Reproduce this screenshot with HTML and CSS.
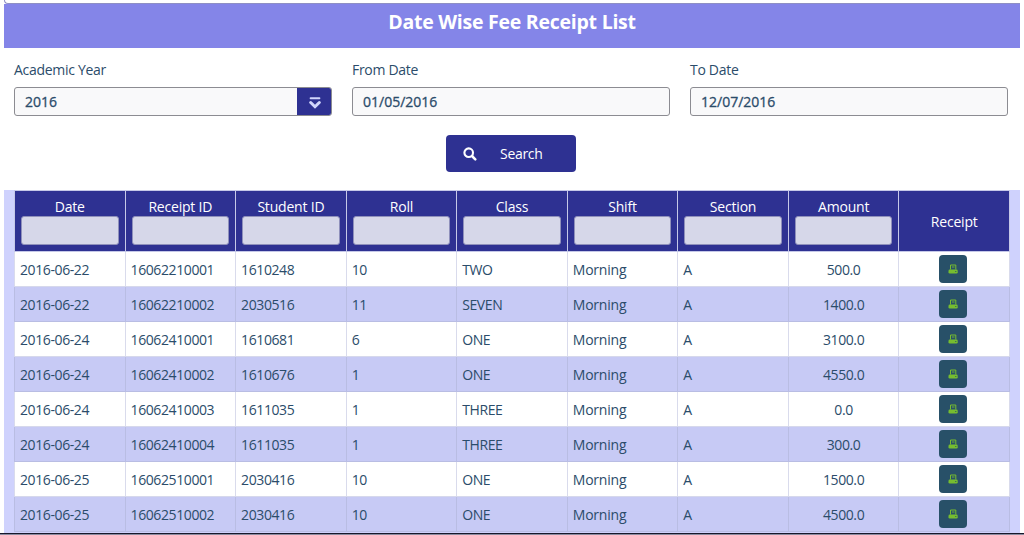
FILE: index.html
```html
<!DOCTYPE html>
<html lang="en">
<head>
<meta charset="utf-8">
<title>Date Wise Fee Receipt List</title>
<link rel="stylesheet" href="styles.css">
</head>
<body>
<svg class="defs" width="0" height="0">
  <symbol id="printer" viewBox="0 0 10 10">
    <path d="M2.5 5.5V1h5.3v4.5" fill="none" stroke="#76bd2f"/>
    <path d="M4 3h2.5" fill="none" stroke="#76bd2f" stroke-width=".9"/>
    <path d="M1.8 5.6h6.6q1.3 0 1.3 1.3v1.3q0 1.3-1.3 1.3H1.8Q.5 9.500.5 8.200V6.900Q.5 5.600 1.800 5.600Z" fill="#76bd2f"/>
    <path d="M7.300 7.500h1" stroke="#285068" fill="none"/>
  </symbol>
</svg>
<div class="page">
  <div class="strip"></div>
  <h1 class="title">Date Wise Fee Receipt List</h1>
  <form class="filters">
    <div class="field"><label>Academic Year</label>
      <div class="control">2016<span class="toggle"><svg width="12" height="12" viewBox="0 0 12 12"><path d="M1.600 1.300h8.800" stroke="#d0d4fb" stroke-width="2" stroke-linecap="round"/><path d="M1.700 5.500L6 9.700l4.300-4.200" fill="none" stroke="#d0d4fb" stroke-width="3" stroke-linecap="round"/></svg></span></div></div>
    <div class="field"><label>From Date</label><div class="control">01/05/2016</div></div>
    <div class="field"><label>To Date</label><div class="control">12/07/2016</div></div>
  </form>
  <div class="actions"><button class="search" type="button"><svg width="14" height="14" viewBox="0 0 14 14"><circle cx="5.7" cy="5.7" r="4.3" fill="none" stroke="#fff" stroke-width="2.1"/><path d="M9 9l3.3 3.3" stroke="#fff" stroke-width="2.5" stroke-linecap="round"/></svg><span>Search</span></button></div>
  <div class="panel">
    <table class="grid">
      <thead><tr>
        <th><span>Date</span><i class="filter"></i></th><th><span>Receipt ID</span><i class="filter"></i></th><th><span>Student ID</span><i class="filter"></i></th><th><span>Roll</span><i class="filter"></i></th><th><span>Class</span><i class="filter"></i></th><th><span>Shift</span><i class="filter"></i></th><th><span>Section</span><i class="filter"></i></th><th><span>Amount</span><i class="filter"></i></th><th class="plain"><span>Receipt</span></th>
      </tr></thead>
      <tbody>
        <tr><td>2016-06-22</td><td>16062210001</td><td>1610248</td><td>10</td><td>TWO</td><td class="word">Morning</td><td>A</td><td class="mid">500.0</td><td class="mid"><span class="print"><svg><use href="#printer"/></svg></span></td></tr>
        <tr><td>2016-06-22</td><td>16062210002</td><td>2030516</td><td>11</td><td>SEVEN</td><td class="word">Morning</td><td>A</td><td class="mid">1400.0</td><td class="mid"><span class="print"><svg><use href="#printer"/></svg></span></td></tr>
        <tr><td>2016-06-24</td><td>16062410001</td><td>1610681</td><td>6</td><td>ONE</td><td class="word">Morning</td><td>A</td><td class="mid">3100.0</td><td class="mid"><span class="print"><svg><use href="#printer"/></svg></span></td></tr>
        <tr><td>2016-06-24</td><td>16062410002</td><td>1610676</td><td>1</td><td>ONE</td><td class="word">Morning</td><td>A</td><td class="mid">4550.0</td><td class="mid"><span class="print"><svg><use href="#printer"/></svg></span></td></tr>
        <tr><td>2016-06-24</td><td>16062410003</td><td>1611035</td><td>1</td><td>THREE</td><td class="word">Morning</td><td>A</td><td class="mid">0.0</td><td class="mid"><span class="print"><svg><use href="#printer"/></svg></span></td></tr>
        <tr><td>2016-06-24</td><td>16062410004</td><td>1611035</td><td>1</td><td>THREE</td><td class="word">Morning</td><td>A</td><td class="mid">300.0</td><td class="mid"><span class="print"><svg><use href="#printer"/></svg></span></td></tr>
        <tr><td>2016-06-25</td><td>16062510001</td><td>2030416</td><td>10</td><td>ONE</td><td class="word">Morning</td><td>A</td><td class="mid">1500.0</td><td class="mid"><span class="print"><svg><use href="#printer"/></svg></span></td></tr>
        <tr><td>2016-06-25</td><td>16062510002</td><td>2030416</td><td>10</td><td>ONE</td><td class="word">Morning</td><td>A</td><td class="mid">4500.0</td><td class="mid"><span class="print"><svg><use href="#printer"/></svg></span></td></tr>
      </tbody>
    </table>
  </div>
</div>
<div class="footer-line"></div>
</body>
</html>
```

FILE: styles.css
```css
* { box-sizing: border-box; }
body {
  margin: 0;
  height: 535px;
  overflow: hidden;
  background: #fff;
  color: #2b4c6a;
  font: 14px/20px "Open Sans", "Noto Sans", sans-serif;
}
.defs { display: block; height: 0; }
.page { height: 533px; padding: 0 4px; overflow: hidden; }
.strip {
  height: 4px;
  border: solid #8e8fc4;
  border-width: 0 0 1px 1px;
  border-radius: 0 0 0 4px;
  background: #fff;
}
.title {
  height: 44px;
  margin: 0;
  background: #8485e8;
  color: #fff;
  font-size: 19.5px;
  line-height: 36px;
  font-weight: 700;
  text-align: center;
  letter-spacing: -.25px;
}
.filters {
  display: grid;
  grid-template-columns: repeat(3, 318px);
  column-gap: 20px;
  padding: 12px 10px 0;
}
.field label { display: block; height: 27px; letter-spacing: -.3px; }
.control {
  display: flex;
  align-items: center;
  justify-content: space-between;
  height: 29px;
  padding-left: 10px;
  border: 1px solid #8c8c92;
  border-radius: 3px;
  background: #f9f9fa;
  -webkit-text-stroke: .3px #2b4c6a;
  overflow: hidden;
}
.toggle {
  display: flex;
  align-items: center;
  justify-content: center;
  width: 35px;
  height: 29px;
  margin-right: -1px;
  padding: 3px 0 0 1px;
  background: #2e3192;
}
.actions { display: flex; justify-content: center; padding: 19px 2px 18px 0; }
.search {
  display: flex;
  align-items: center;
  width: 130px;
  height: 37px;
  padding: 0 0 0 17px;
  gap: 23px;
  border: 0;
  border-radius: 4px;
  background: #2e3192;
  color: #fff;
  font: inherit;
  letter-spacing: -.3px;
}
.panel { height: 343px; padding: 0 10px; background: #cfd2fd; }
.grid {
  width: 996px;
  table-layout: fixed;
  border-collapse: collapse;
}
.grid th {
  height: 61px;
  padding: 6px 6px 0;
  vertical-align: top;
  border: 1px solid #c5c8e8;
  background: #2e3192;
  color: #fff;
  font-weight: 500;
  letter-spacing: -.2px;
}
.grid th span { display: block; height: 19px; }
.grid th.plain { vertical-align: middle; padding-top: 1px; }
.filter {
  display: block;
  height: 29px;
  border: 1px solid #8f90bb;
  border-radius: 3px;
  background: #d6d7e9;
}
.grid td {
  height: 35px;
  padding: 1px 5px 0;
  border: 1px solid #b9bfe5;
  border-color: #d6d8ec #d9dbec;
  background: #fff;
  letter-spacing: -.4px;
}
.grid td.word { letter-spacing: -.2px; }
.grid tbody tr:nth-child(even) td { background: #c7caf5; border-color: #b9bde3; }
.grid td.mid { text-align: center; }
.print {
  display: flex;
  align-items: center;
  justify-content: center;
  width: 28px;
  height: 28px;
  margin: -1px 0 0 35px;
  border-radius: 4px;
  background: #285068;
}
.print svg { width: 10px; height: 10px; }
.footer-line { height: 2px; border-top: 1px solid #17182a; background: #8c8ca0; }
```
